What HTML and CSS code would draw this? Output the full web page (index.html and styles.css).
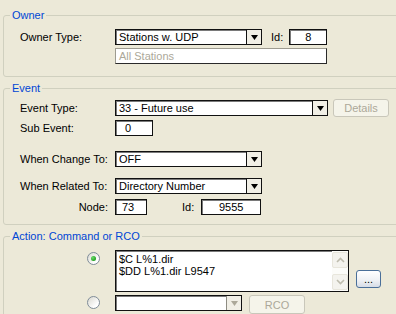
FILE: index.html
```html
<!DOCTYPE html>
<html lang="en">
<head>
  <meta charset="UTF-8">
  <title>Event Action</title>
  <link rel="stylesheet" href="styles.css">
</head>
<body>
  <div class="dialog">

    <!-- Owner -->
    <fieldset class="group">
      <legend>Owner</legend>
      <div class="group-body owner-body">
        <div class="row">
          <span class="cap">Owner Type:</span>
          <div class="combo w147">
            <span class="combo-text">Stations w. UDP</span>
            <span class="combo-btn"><svg width="7" height="5" viewBox="0 0 7 5"><polygon points="0,0 7,0 3.5,5" fill="#000"/></svg></span>
          </div>
          <span class="cap-inline owner-id">Id:</span>
          <div class="edit w38 centered">8</div>
        </div>
        <div class="row row-tight">
          <span class="cap"></span>
          <div class="edit w212 disabled">All Stations</div>
        </div>
      </div>
    </fieldset>

    <!-- Event -->
    <fieldset class="group">
      <legend>Event</legend>
      <div class="group-body event-body">
        <div class="row">
          <span class="cap">Event Type:</span>
          <div class="combo w213">
            <span class="combo-text">33 - Future use</span>
            <span class="combo-btn"><svg width="7" height="5" viewBox="0 0 7 5"><polygon points="0,0 7,0 3.5,5" fill="#000"/></svg></span>
          </div>
          <button class="xp-btn off details-btn">Details</button>
        </div>
        <div class="row sub-row">
          <span class="cap">Sub Event:</span>
          <div class="edit w38 pad-sub">0</div>
        </div>
        <div class="row change-row">
          <span class="cap">When Change To:</span>
          <div class="combo w147">
            <span class="combo-text">OFF</span>
            <span class="combo-btn"><svg width="7" height="5" viewBox="0 0 7 5"><polygon points="0,0 7,0 3.5,5" fill="#000"/></svg></span>
          </div>
        </div>
        <div class="row related-row">
          <span class="cap">When Related To:</span>
          <div class="combo w147">
            <span class="combo-text">Directory Number</span>
            <span class="combo-btn"><svg width="7" height="5" viewBox="0 0 7 5"><polygon points="0,0 7,0 3.5,5" fill="#000"/></svg></span>
          </div>
        </div>
        <div class="row node-row">
          <span class="cap right">Node:</span>
          <div class="edit w32 pad-node">73</div>
          <span class="cap-inline node-id">Id:</span>
          <div class="edit w60 centered">9555</div>
        </div>
      </div>
    </fieldset>

    <!-- Action -->
    <fieldset class="group">
      <legend>Action: Command or RCO</legend>
      <div class="group-body action-body">
        <div class="row memo-row">
          <span class="cap radio-cap"><span class="radio checked"></span></span>
          <div class="memo">
            <div class="memo-text">
              <div>$C L%1.dir</div>
              <div>$DD L%1.dir L9547</div>
            </div>
            <div class="scroll">
              <span class="scroll-btn"><svg width="9" height="6" viewBox="0 0 9 6"><polyline points="1,5 4.5,1.5 8,5" fill="none" stroke="#BEBCAE" stroke-width="1.6"/></svg></span>
              <span class="scroll-btn"><svg width="9" height="6" viewBox="0 0 9 6"><polyline points="1,1 4.5,4.5 8,1" fill="none" stroke="#BEBCAE" stroke-width="1.6"/></svg></span>
            </div>
          </div>
          <button class="xp-btn dots-btn">...</button>
        </div>
        <div class="row rco-row">
          <span class="cap radio-cap"><span class="radio"></span></span>
          <div class="combo w127 combo-off">
            <span class="combo-text"></span>
            <span class="combo-btn"><svg width="7" height="5" viewBox="0 0 7 5"><polygon points="0,0 7,0 3.5,5" fill="#ACA899"/></svg></span>
          </div>
          <button class="xp-btn off rco-btn">RCO</button>
        </div>
      </div>
    </fieldset>

  </div>
</body>
</html>
```

FILE: styles.css
```css
/* Dialog base */
html, body {
  margin: 0;
  padding: 0;
  overflow: hidden;
}
body {
  background: #ECE9D8;
  font-family: "Liberation Sans", Arial, sans-serif;
  font-size: 11px;
  color: #000;
}
.dialog {
  width: 404px;
  height: 314px;
  box-sizing: border-box;
  overflow: hidden;
  padding: 9px 0 0 3px;
}

/* Group boxes */
.group {
  border: 1px solid #D0D0BF;
  border-radius: 3px;
  margin: 0 0 5px;
  padding: 0;
  min-width: 0;
}
.group legend {
  color: #0046D5;
  padding: 0 2px;
  margin-left: 6px;
  line-height: 13px;
}
.group-body {
  padding-left: 16px;
}
.owner-body {
  padding-top: 7px;
  padding-bottom: 12px;
}
.event-body {
  padding-top: 5px;
  padding-bottom: 9px;
}
.action-body {
  padding-top: 7px;
  padding-bottom: 20px;
}

/* Rows */
.row {
  display: flex;
  align-items: center;
  height: 16px;
}
.row-tight { margin-top: 3px; }
.sub-row { margin-top: 4px; }
.change-row { margin-top: 15px; }
.related-row { margin-top: 11px; }
.node-row { margin-top: 5px; }
.memo-row {
  height: 42px;
  align-items: flex-start;
}
.rco-row { margin-top: 3px; }

.cap {
  width: 95px;
  flex: none;
  white-space: nowrap;
}
.cap.right {
  text-align: right;
  padding-right: 7px;
  box-sizing: border-box;
}
.cap-inline { white-space: nowrap; }
.owner-id { margin: 0 6px 0 9px; }
.node-id { margin: 0 7px 0 35px; }

/* Edit boxes */
.edit {
  height: 16px;
  box-sizing: border-box;
  border: 1px solid #111;
  box-shadow: inset 1px 1px #7a7a7a;
  background: #fff;
  line-height: 14px;
  padding: 0 3px;
  white-space: nowrap;
  overflow: hidden;
}
.edit.centered { text-align: center; }
.edit.disabled {
  color: #ACA899;
  border-color: #9d9b90 #2a2a2a #2a2a2a #9d9b90;
  box-shadow: none;
}
.pad-sub { padding-left: 9px; }
.pad-node { padding-left: 6px; }
.w32 { width: 32px; }
.w38 { width: 38px; }
.w60 { width: 60px; }
.w127 { width: 127px; }
.w147 { width: 147px; }
.w212 { width: 212px; }
.w213 { width: 213px; }

/* Combo boxes */
.combo {
  height: 16px;
  box-sizing: border-box;
  border: 1px solid #111;
  box-shadow: inset 1px 1px #7a7a7a;
  background: #fff;
  display: flex;
}
.combo-text {
  flex: 1;
  line-height: 14px;
  padding-left: 3px;
  white-space: nowrap;
  overflow: hidden;
}
.combo-btn {
  width: 14px;
  border-left: 1px solid #111;
  background: #F1EFE6;
  display: flex;
  align-items: center;
  justify-content: center;
}
.combo-off .combo-btn {
  border-left-color: #8e8c82;
}

/* XP buttons */
.xp-btn {
  font-family: inherit;
  font-size: 11px;
  box-sizing: border-box;
  border: 1px solid #003C74;
  border-radius: 3px;
  background: linear-gradient(#FFFFFF, #F0EFEA 70%, #D8D5C9);
  color: #000;
  padding: 0;
  height: 18px;
}
.xp-btn.off {
  border-color: #C9C7BA;
  background: #F5F4EA;
  color: #ACA899;
}
.details-btn {
  width: 56px;
  margin-left: 5px;
}
.rco-btn {
  width: 56px;
  height: 19px;
  margin-left: 7px;
  align-self: flex-start;
}
.dots-btn {
  width: 25px;
  height: 18px;
  margin: 20px 0 0 7px;
  line-height: 10px;
  border-color: #4a6f99;
  background: linear-gradient(#FFFFFF, #EEF0F4 60%, #D6DCE6);
}

/* Radio buttons */
.radio-cap {
  display: flex;
  justify-content: flex-end;
  padding-right: 15px;
  box-sizing: border-box;
}
.memo-row .radio-cap { padding-top: 2px; }
.rco-row .radio-cap { padding-top: 1px; align-self: flex-start; }
.radio {
  width: 13px;
  height: 13px;
  box-sizing: border-box;
  border-radius: 50%;
  border: 1px solid #7F8C98;
  background: linear-gradient(135deg, #D9D8D0, #FFFFFF 75%);
  display: flex;
  align-items: center;
  justify-content: center;
}
.radio.checked::after {
  content: "";
  width: 5px;
  height: 5px;
  border-radius: 50%;
  background: radial-gradient(circle at 35% 35%, #6BDB6B, #21A121 70%);
}

/* Memo with scrollbar */
.memo {
  width: 234px;
  height: 42px;
  box-sizing: border-box;
  border: 1px solid #111;
  box-shadow: inset 1px 1px #7a7a7a;
  background: #fff;
  display: flex;
}
.memo-text {
  flex: 1;
  padding: 2px 2px 0 3px;
  line-height: 12px;
}
.scroll {
  width: 16px;
  background: #FCFCF9;
  display: flex;
  flex-direction: column;
  justify-content: space-between;
  padding: 1px 0;
  box-sizing: border-box;
}
.scroll-btn {
  height: 16px;
  box-sizing: border-box;
  border: 1px solid #E8E6DC;
  border-radius: 2px;
  background: #F4F3EE;
  display: flex;
  align-items: center;
  justify-content: center;
}
```
